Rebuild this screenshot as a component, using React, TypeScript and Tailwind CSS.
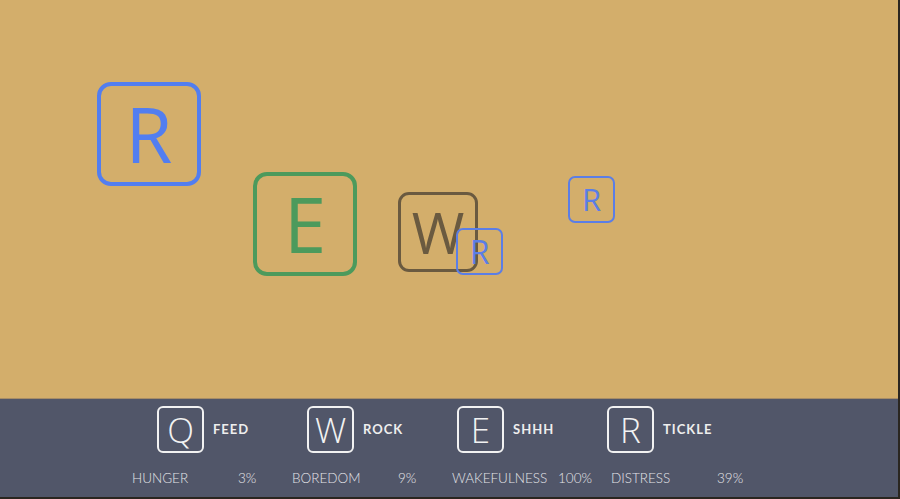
import React from "react";

type Tile = {
  ch: string;
  x: number;
  y: number;
  size: number;
  border: number;
  radius: number;
  font: number;
  color: string;
};

const tiles: Tile[] = [
  { ch: "R", x: 97, y: 82, size: 104, border: 4, radius: 14, font: 76, color: "#527ef0" },
  { ch: "E", x: 253, y: 172, size: 104, border: 4, radius: 14, font: 76, color: "#4c9a5c" },
  { ch: "W", x: 398, y: 192, size: 80, border: 3, radius: 11, font: 57, color: "#6a5a40" },
  { ch: "R", x: 456, y: 228, size: 47, border: 2, radius: 7, font: 32, color: "#5b7ee6" },
  { ch: "R", x: 568, y: 176, size: 47, border: 2, radius: 7, font: 31, color: "#5b7ee6" },
];

const keys = [
  { k: "Q", label: "FEED" },
  { k: "W", label: "ROCK" },
  { k: "E", label: "SHHH" },
  { k: "R", label: "TICKLE" },
];

const stats = [
  { label: "HUNGER", value: "3%" },
  { label: "BOREDOM", value: "9%" },
  { label: "WAKEFULNESS", value: "100%" },
  { label: "DISTRESS", value: "39%" },
];

export default function App() {
  return (
    <div className="w-[900px] h-[499px] flex bg-[#2a2620] overflow-hidden" style={{ fontFamily: "'Open Sans', sans-serif" }}>
      <div className="w-[898px] h-[497px] flex flex-col">
        <div className="relative h-[399px] bg-[#d3ae6b] border-b border-[#a78d67]">
          {tiles.map((t, i) => (
            <div
              key={i}
              className="absolute flex items-center justify-center box-border"
              style={{
                left: t.x,
                top: t.y,
                width: t.size,
                height: t.size,
                border: `${t.border}px solid ${t.color}`,
                borderRadius: t.radius,
                color: t.color,
                fontSize: t.font,
                lineHeight: 1,
                fontFamily: "'Open Sans', sans-serif",
              }}
            >
              {t.ch}
            </div>
          ))}
        </div>
        <div className="flex-1 bg-[#515669] flex flex-col pl-[132px] pt-[7px]">
          <div className="flex pl-[25px]">
            {keys.map((k) => (
              <div key={k.k} className="w-[150px] flex items-center">
                <div className="w-[47px] h-[47px] border-2 border-[#f2f2f2] rounded-[6px] flex items-center justify-center text-[35px] leading-none text-[#f2f2f2] font-light">
                  {k.k}
                </div>
                <div className="ml-[9px] text-[13px] font-bold tracking-[1px] text-[#eeeeee]" style={{ fontFamily: "Lato, sans-serif" }}>
                  {k.label}
                </div>
              </div>
            ))}
          </div>
          <div className="flex mt-[19px] text-[13.5px] leading-none text-[#e4e4e8]" style={{ fontFamily: "Lato, sans-serif", fontWeight: 300 }}>
            {stats.map((s, i) => (
              <div key={s.label} className={i === 2 ? "w-[159px] flex" : "w-[160px] flex"}>
                <span className="w-[106px]">{s.label}</span>
                <span>{s.value}</span>
              </div>
            ))}
          </div>
        </div>
      </div>
    </div>
  );
}
